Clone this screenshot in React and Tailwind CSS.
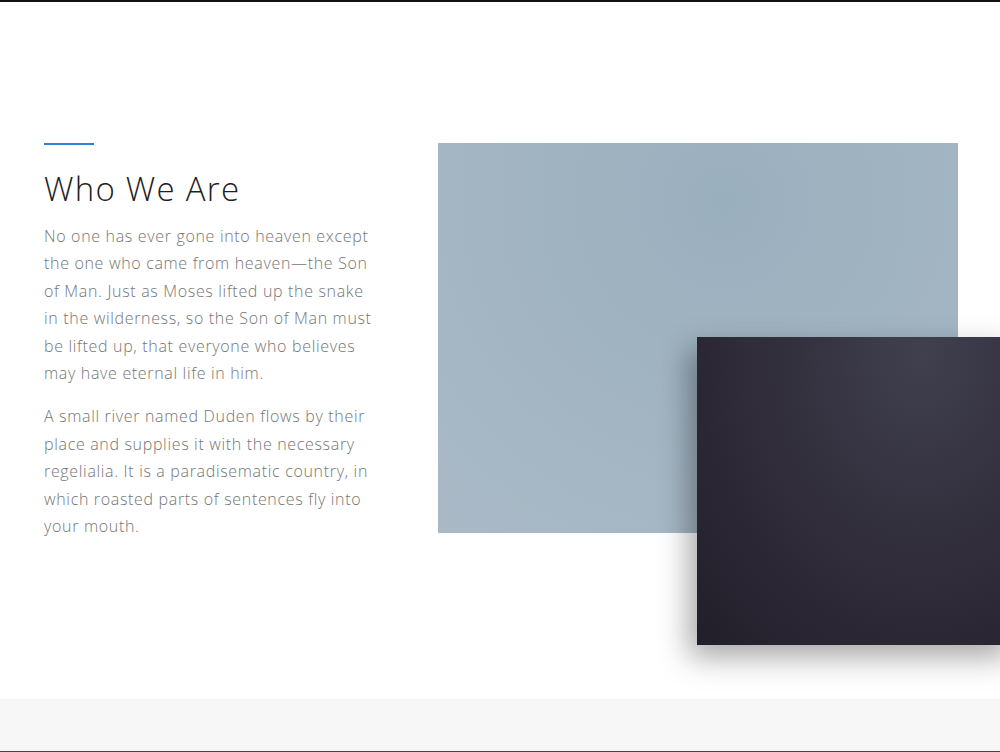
import React from "react";

const About = () => {
  return (
    <div className="relative flex pt-[141px] pl-[44px] h-[697px]">
      <div className="w-[330px] shrink-0">
        <div className="w-[50px] h-[2px] bg-[#2f80df]" />
        <h2 className="mt-[24px] text-[33px] leading-[40px] font-light text-[#1f1f1f] tracking-[0.038em]">
          Who We Are
        </h2>
        <div className="mt-[14px] text-[16px] leading-[27.4px] font-light text-[#757575] tracking-[0.042em]">
          <p>
            No one has ever gone into heaven except the one who came from
            heaven—the Son of Man. Just as Moses lifted up the snake in the
            wilderness, so the Son of Man must be lifted up, that everyone who
            believes may have eternal life in him.
          </p>
          <p className="mt-[16px]">
            A small river named Duden flows by their place and supplies it with
            the necessary regelialia. It is a paradisematic country, in which
            roasted parts of sentences fly into your mouth.
          </p>
        </div>
      </div>
      <div className="relative ml-[64px]">
        <div className="w-[520px] h-[390px] bg-[radial-gradient(circle_at_55%_15%,#9aafbd_0%,#a1b4c2_45%,#aab9c6_100%)]" />
        <div className="absolute left-[259px] top-[194px] w-[320px] h-[308px] shadow-[-8px_12px_28px_rgba(0,0,0,0.35)] bg-[radial-gradient(ellipse_at_70%_5%,#40404f_0%,#34313f_40%,#2a2532_75%,#211f2b_100%)]" />
      </div>
    </div>
  );
};

export default function App() {
  return (
    <div
      className="w-[1000px] h-[752px] overflow-hidden bg-white border-t-[2px] border-t-[#111] border-b border-b-[#444] flex flex-col"
      style={{ fontFamily: '"Open Sans", "Liberation Sans", sans-serif' }}
    >
      <About />
      <div className="flex-1 bg-[#f7f7f7] border-t border-t-[#f2f2f2]" />
    </div>
  );
}
